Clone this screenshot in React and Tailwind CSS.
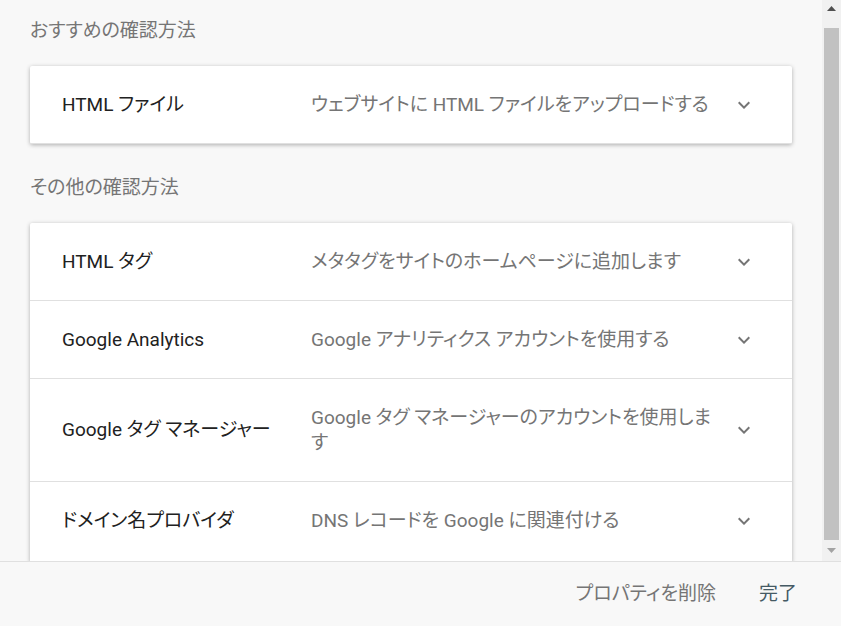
const rows = [
  { name: "HTML タグ", desc: "メタタグをサイトのホームページに追加します" },
  { name: "Google Analytics", desc: "Google アナリティクス アカウントを使用する" },
  { name: "Google タグ マネージャー", desc: "Google タグ マネージャーのアカウントを使用します" },
  { name: "ドメイン名プロバイダ", desc: "DNS レコードを Google に関連付ける" },
];

const Chevron = () => (
  <svg width="24" height="24" viewBox="0 0 24 24" className="shrink-0 text-[#757575]">
    <path d="M7.41 8.59 12 13.17l4.59-4.58L18 10l-6 6-6-6 1.41-1.41z" fill="currentColor" />
  </svg>
);

const Row = ({ name, desc, last }) => (
  <div
    className={`flex items-center pl-8 pr-[36px] pt-[26px] ${
      last ? "pb-[30px]" : "pb-[26px] border-b border-[#e0e0e0]"
    }`}
  >
    <div className="w-[249px] shrink-0 text-[#212121]">{name}</div>
    <div className="flex-1 text-[#757575] pr-[16px] leading-[25px]">{desc}</div>
    <Chevron />
  </div>
);

const App = () => {
  return (
    <div
      className="h-[626px] w-[841px] flex flex-col bg-[#f8f8f8] overflow-hidden text-[19px] leading-6 [font-feature-settings:'palt']"
      style={{ fontFamily: "Roboto, 'Noto Sans CJK JP', sans-serif" }}
    >
      <div className="flex flex-1 min-h-0">
        {/* scroll content */}
        <div className="flex-1 overflow-hidden pl-[30px] pr-[30px] pt-[19px]">
          <h2 className="text-[#757575] mb-[23px]">おすすめの確認方法</h2>
          <div className="bg-white rounded-[2px] shadow-[0_1px_4px_rgba(0,0,0,0.3)] mb-[32px]">
            <Row name="HTML ファイル" desc="ウェブサイトに HTML ファイルをアップロードする" />
          </div>
          <h2 className="text-[#757575] mb-[23px]">その他の確認方法</h2>
          <div className="bg-white rounded-[2px] shadow-[0_1px_4px_rgba(0,0,0,0.3)]">
            {rows.map((r, i) => (
              <Row key={r.name} {...r} last={i === rows.length - 1} />
            ))}
          </div>
        </div>

        {/* scrollbar */}
        <div className="w-[19px] shrink-0 bg-[#f1f1f1] flex flex-col items-center">
          <div className="h-[17px] flex items-center justify-center">
            <svg width="9" height="5" viewBox="0 0 9 5">
              <path d="M4.5 0 9 5H0z" fill="#505050" />
            </svg>
          </div>
          <div className="w-[15px] h-[512px] mt-[11px] bg-[#c1c1c1]" />
          <div className="flex-1 flex items-center justify-center">
            <svg width="9" height="5" viewBox="0 0 9 5">
              <path d="M0 0h9L4.5 5z" fill="#a3a3a3" />
            </svg>
          </div>
        </div>
      </div>

      {/* footer */}
      <div className="h-[65px] shrink-0 border-t border-[#e0e0e0] bg-[#f8f8f8] flex items-center justify-end gap-[43px] pr-[44px]">
        <button className="text-[#757575]">プロパティを削除</button>
        <button className="text-[#455a64]">完了</button>
      </div>
    </div>
  );
};

export default App;
